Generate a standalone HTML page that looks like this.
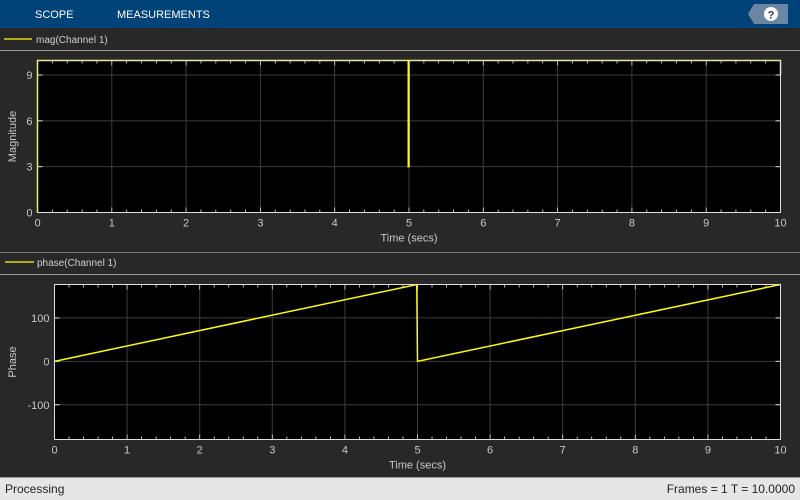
<!DOCTYPE html>
<html><head><meta charset="utf-8"><style>
html,body{margin:0;padding:0;width:800px;height:500px;overflow:hidden;background:#262626;font-family:"Liberation Sans",sans-serif}
</style></head><body>
<svg id="s" width="800" height="500" xmlns="http://www.w3.org/2000/svg" font-family="Liberation Sans, sans-serif">
<rect x="0" y="0" width="800" height="28" fill="#004378"/>
<text x="35" y="18" fill="#fff" font-size="11">SCOPE</text>
<text x="117" y="18" fill="#fff" font-size="11">MEASUREMENTS</text>
<polygon points="754,4 788,4 788,24 754,24 748,14" fill="#6b86a3"/>
<circle cx="771" cy="14" r="7" fill="#fff"/>
<text x="771" y="18.5" fill="#333" font-size="11" font-weight="bold" text-anchor="middle">?</text>
<rect x="0" y="28" width="800" height="449" fill="#282828"/>
<line x1="4" y1="39" x2="32" y2="39" stroke="#ffff00" stroke-width="1.3"/>
<text x="36" y="43" fill="#d0d0d0" font-size="10">mag(Channel 1)</text>
<line x1="0" y1="50.5" x2="800" y2="50.5" stroke="#9a9a9a"/>
<line x1="0" y1="252.5" x2="800" y2="252.5" stroke="#7a7a7a"/>
<line x1="5" y1="262" x2="34" y2="262" stroke="#ffff00" stroke-width="1.3"/>
<text x="37" y="266" fill="#d0d0d0" font-size="10">phase(Channel 1)</text>
<line x1="0" y1="274.5" x2="800" y2="274.5" stroke="#9a9a9a"/>
<g id="ax"></g>
<rect x="0" y="477" width="800" height="23" fill="#e6e6e6"/>
<line x1="0" y1="477.5" x2="800" y2="477.5" stroke="#a0a0a0"/>
<text x="5" y="493" fill="#222" font-size="12">Processing</text>
<text x="795" y="493" fill="#222" font-size="12" text-anchor="end">Frames = 1  T = 10.0000</text>
</svg>
<script>
var g=document.getElementById('ax'),h='';
function axes(x0,x1,y0,y1,yt,ymin,ymax,ylab,ylx,sig){
 h+='<rect x="'+x0+'" y="'+y0+'" width="'+(x1-x0)+'" height="'+(y1-y0)+'" fill="#000"/>';
 var X=function(t){return x0+(x1-x0)*t/10},Y=function(v){return y1-(y1-y0)*(v-ymin)/(ymax-ymin)};
 for(var i=0;i<=10;i++){var x=X(i);
  if(i>0&&i<10)h+='<line x1="'+x+'" y1="'+y0+'" x2="'+x+'" y2="'+y1+'" stroke="#3c3c3c"/>';
  h+='<text x="'+x+'" y="'+(y1+14)+'" fill="#c8c8c8" font-size="11" text-anchor="middle">'+i+'</text>';}
 for(var i=0;i<=50;i++){var x=X(i/5),l=i%5?3:5;
  h+='<line x1="'+x+'" y1="'+y1+'" x2="'+x+'" y2="'+(y1-l)+'" stroke="#ddd" stroke-width="0.8"/><line x1="'+x+'" y1="'+y0+'" x2="'+x+'" y2="'+(y0+l)+'" stroke="#ddd" stroke-width="0.8"/>';}
 yt.forEach(function(v){var y=Y(v);
  if(y>y0+1&&y<y1-1)h+='<line x1="'+x0+'" y1="'+y+'" x2="'+x1+'" y2="'+y+'" stroke="#3c3c3c"/>';
  h+='<line x1="'+x0+'" y1="'+y+'" x2="'+(x0+5)+'" y2="'+y+'" stroke="#ddd"/><line x1="'+x1+'" y1="'+y+'" x2="'+(x1-5)+'" y2="'+y+'" stroke="#ddd"/>';
  h+='<text x="'+(x0-5)+'" y="'+(y+4)+'" fill="#c8c8c8" font-size="11" text-anchor="end">'+v+'</text>';});
 h+='<polyline points="'+sig.map(function(p){return X(p[0])+','+Y(p[1])}).join(' ')+'" fill="none" stroke="#ffff00" stroke-width="1.5"/>';
 h+='<rect x="'+x0+'" y="'+y0+'" width="'+(x1-x0)+'" height="'+(y1-y0)+'" fill="none" stroke="#e0e0e0"/>';
 h+='<text x="'+((x0+x1)/2)+'" y="'+(y1+29)+'" fill="#c8c8c8" font-size="11" text-anchor="middle">Time (secs)</text>';
 var cy=(y0+y1)/2;
 h+='<text x="'+ylx+'" y="'+cy+'" fill="#c8c8c8" font-size="11" text-anchor="middle" transform="rotate(-90 '+ylx+' '+cy+')">'+ylab+'</text>';
}
axes(37.5,780.5,60.5,212.5,[0,3,6,9],0,9.95,'Magnitude',16,[[0,0],[0,9.95],[4.99,9.95],[4.99,3],[5.0,3],[5.0,9.95],[10,9.95],[10,9]]);
axes(54.5,780.5,284.5,439.5,[-100,0,100],-180,177,'Phase',16,[[0,0],[4.99,177],[4.99,177],[5.0,0],[10,177]]);
g.innerHTML=h;
</script>
</body></html>
